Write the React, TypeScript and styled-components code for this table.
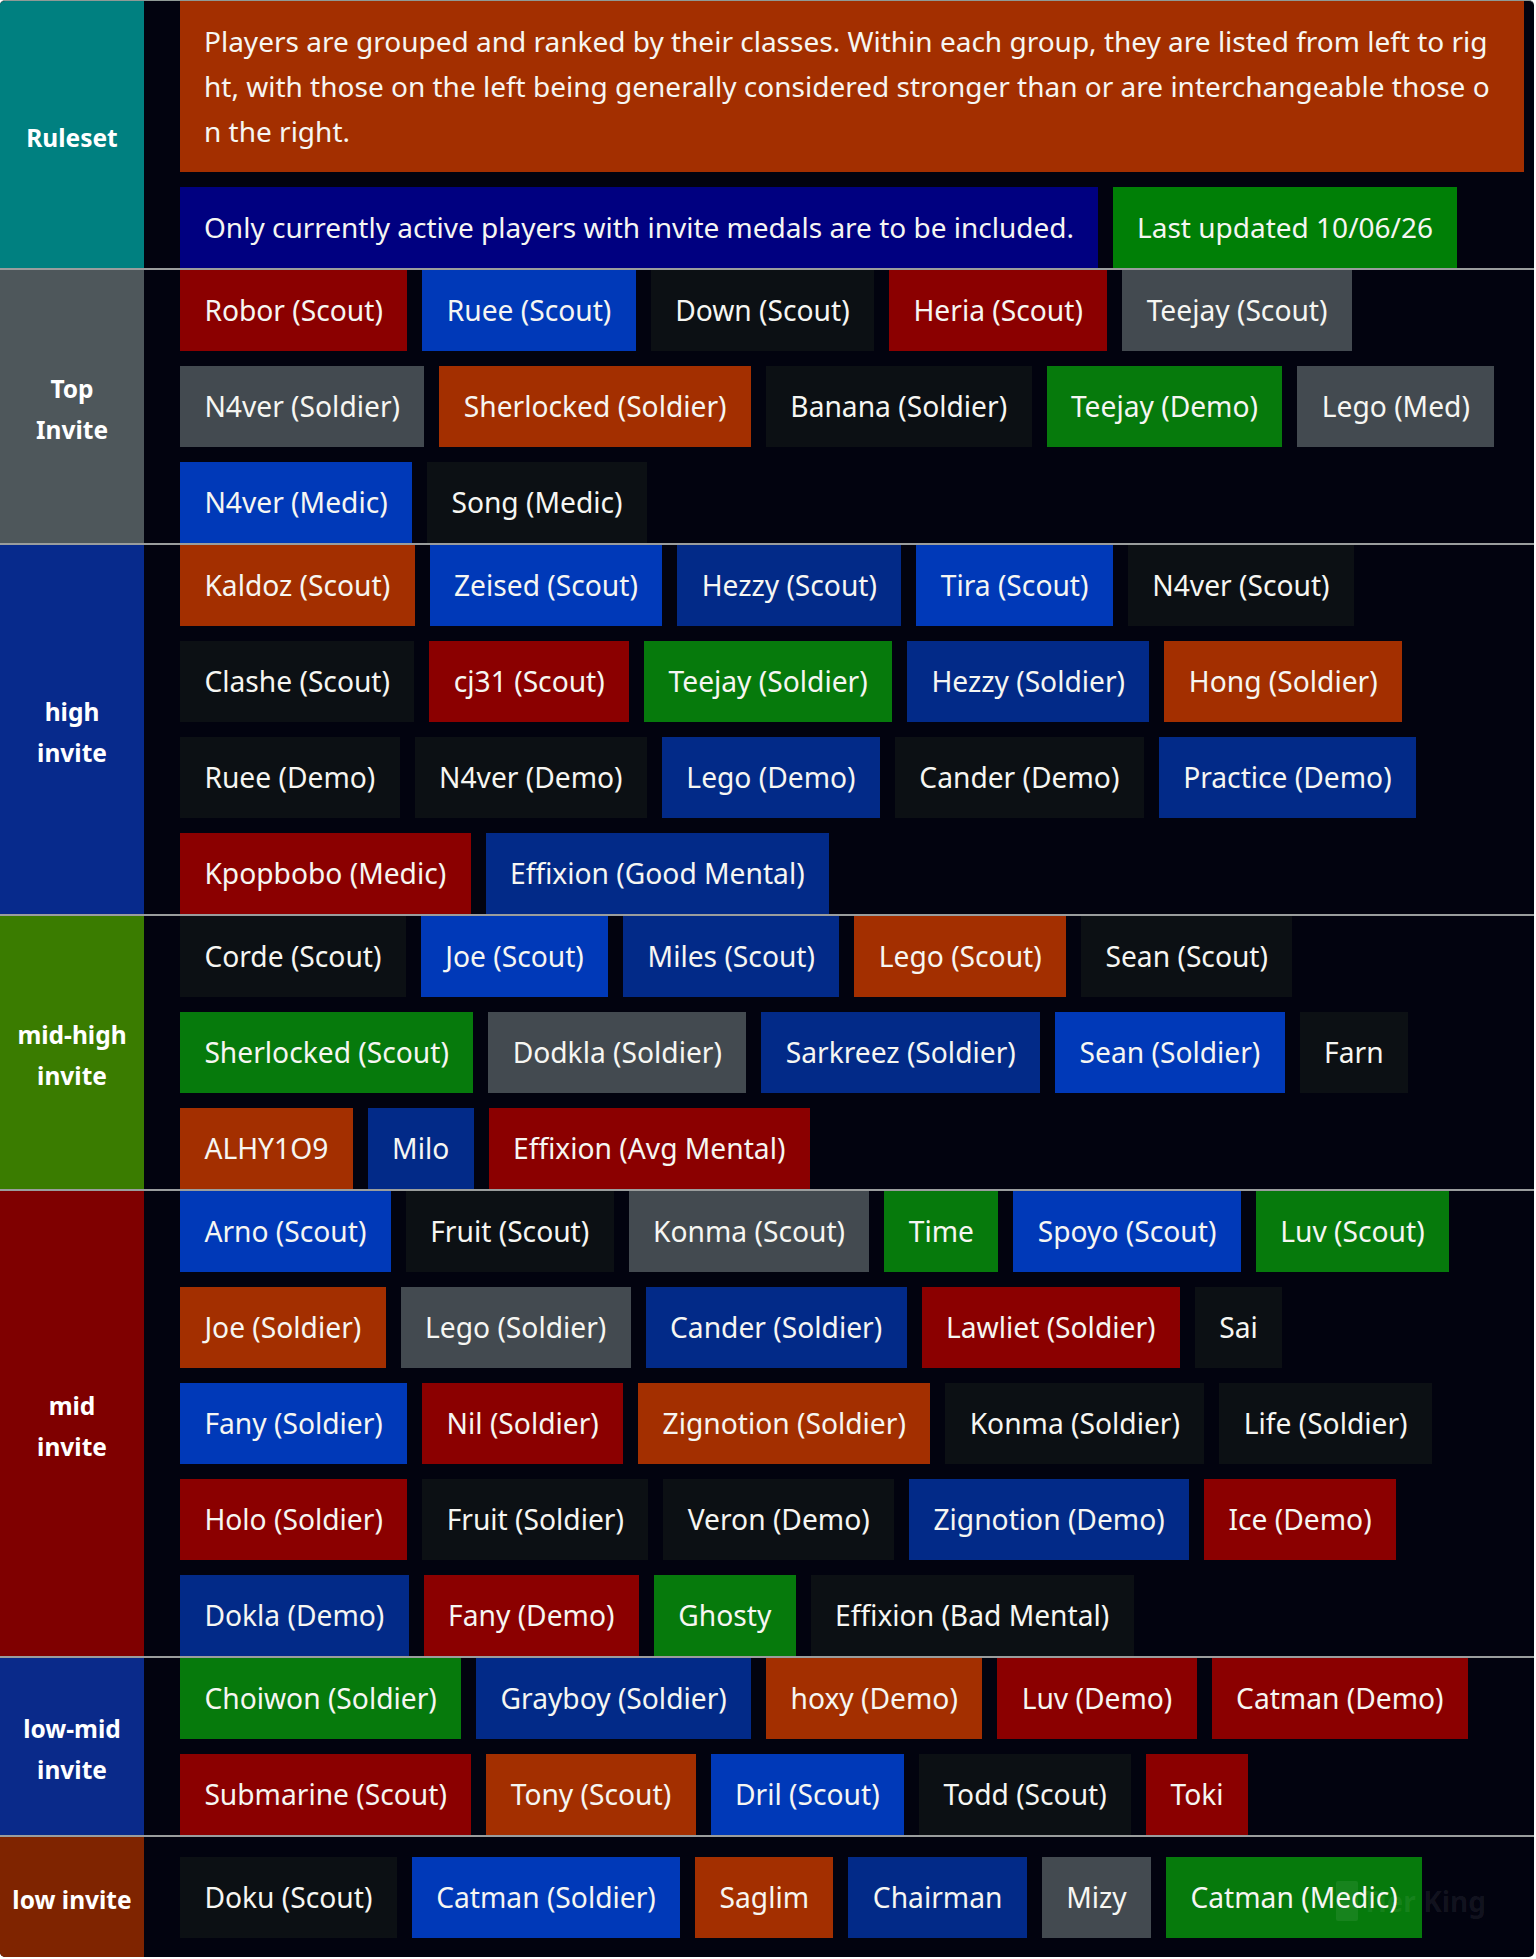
import React from "react";
import styled, { createGlobalStyle } from "styled-components";

const Global = createGlobalStyle`
  html, body { margin: 0; padding: 0; background: #ffffff; }
  body { font-family: "Noto Sans", "Open Sans", sans-serif; }
`;

type Tone = "red" | "blue" | "navy" | "black" | "gray" | "orange" | "green" | "deepnavy" | "lime";

const tones: Record<Tone, string> = {
  red: "#8b0000",
  blue: "#0039b8",
  navy: "#022a88",
  black: "#0c1014",
  gray: "#434a50",
  orange: "#a32f00",
  green: "#067a0c",
  deepnavy: "#000080",
  lime: "#007f06",
};

type Player = [string, Tone];

interface TierData {
  label: string[];
  color: string;
  rows: Player[][];
}

const tiers: TierData[] = [
  {
    label: ["Top", "Invite"],
    color: "#4e575b",
    rows: [
      [["Robor (Scout)", "red"], ["Ruee (Scout)", "blue"], ["Down (Scout)", "black"], ["Heria (Scout)", "red"], ["Teejay (Scout)", "gray"]],
      [["N4ver (Soldier)", "gray"], ["Sherlocked (Soldier)", "orange"], ["Banana (Soldier)", "black"], ["Teejay (Demo)", "green"], ["Lego (Med)", "gray"]],
      [["N4ver (Medic)", "blue"], ["Song (Medic)", "black"]],
    ],
  },
  {
    label: ["high", "invite"],
    color: "#072a8c",
    rows: [
      [["Kaldoz (Scout)", "orange"], ["Zeised (Scout)", "blue"], ["Hezzy (Scout)", "navy"], ["Tira (Scout)", "blue"], ["N4ver (Scout)", "black"]],
      [["Clashe (Scout)", "black"], ["cj31 (Scout)", "red"], ["Teejay (Soldier)", "green"], ["Hezzy (Soldier)", "navy"], ["Hong (Soldier)", "orange"]],
      [["Ruee (Demo)", "black"], ["N4ver (Demo)", "black"], ["Lego (Demo)", "navy"], ["Cander (Demo)", "black"], ["Practice (Demo)", "navy"]],
      [["Kpopbobo (Medic)", "red"], ["Effixion (Good Mental)", "navy"]],
    ],
  },
  {
    label: ["mid-high", "invite"],
    color: "#3a7c00",
    rows: [
      [["Corde (Scout)", "black"], ["Joe (Scout)", "blue"], ["Miles (Scout)", "navy"], ["Lego (Scout)", "orange"], ["Sean (Scout)", "black"]],
      [["Sherlocked (Scout)", "green"], ["Dodkla (Soldier)", "gray"], ["Sarkreez (Soldier)", "navy"], ["Sean (Soldier)", "blue"], ["Farn", "black"]],
      [["ALHY1O9", "orange"], ["Milo", "navy"], ["Effixion (Avg Mental)", "red"]],
    ],
  },
  {
    label: ["mid", "invite"],
    color: "#7f0000",
    rows: [
      [["Arno (Scout)", "blue"], ["Fruit (Scout)", "black"], ["Konma (Scout)", "gray"], ["Time", "green"], ["Spoyo (Scout)", "blue"], ["Luv (Scout)", "green"]],
      [["Joe (Soldier)", "orange"], ["Lego (Soldier)", "gray"], ["Cander (Soldier)", "navy"], ["Lawliet (Soldier)", "red"], ["Sai", "black"]],
      [["Fany (Soldier)", "blue"], ["Nil (Soldier)", "red"], ["Zignotion (Soldier)", "orange"], ["Konma (Soldier)", "black"], ["Life (Soldier)", "black"]],
      [["Holo (Soldier)", "red"], ["Fruit (Soldier)", "black"], ["Veron (Demo)", "black"], ["Zignotion (Demo)", "navy"], ["Ice (Demo)", "red"]],
      [["Dokla (Demo)", "navy"], ["Fany (Demo)", "red"], ["Ghosty", "green"], ["Effixion (Bad Mental)", "black"]],
    ],
  },
  {
    label: ["low-mid", "invite"],
    color: "#0a2a8a",
    rows: [
      [["Choiwon (Soldier)", "green"], ["Grayboy (Soldier)", "navy"], ["hoxy (Demo)", "orange"], ["Luv (Demo)", "red"], ["Catman (Demo)", "red"]],
      [["Submarine (Scout)", "red"], ["Tony (Scout)", "orange"], ["Dril (Scout)", "blue"], ["Todd (Scout)", "black"], ["Toki", "red"]],
    ],
  },
  {
    label: ["low invite"],
    color: "#7f2400",
    rows: [
      [["Doku (Scout)", "black"], ["Catman (Soldier)", "blue"], ["Saglim", "orange"], ["Chairman", "navy"], ["Mizy", "gray"], ["Catman (Medic)", "green"]],
    ],
  },
];

const ruleLines = [
  "Players are grouped and ranked by their classes. Within each group, they are listed from left to rig",
  "ht, with those on the left being generally considered stronger than or are interchangeable those o",
  "n the right.",
];

const Board = styled.main`
  position: relative;
  width: 1534px;
  background: #02030f;
  border-top: 1px solid #8f9a96;
  border-radius: 5px;
  overflow: hidden;
`;

const Tier = styled.section`
  display: flex;
  min-height: 120px;
  & + & {
    border-top: 2px solid #9a9d9d;
  }
`;

const Label = styled.div<{ $bg: string }>`
  flex: 0 0 144px;
  box-sizing: border-box;
  padding-top: 5px;
  background: ${(p) => p.$bg};
  display: flex;
  flex-direction: column;
  align-items: center;
  justify-content: center;
  color: #ffffff;
  font-size: 24.5px;
  font-weight: 700;
  line-height: 41px;
  text-align: center;
  white-space: nowrap;
`;

const LabelLine = styled.span`
  display: block;
`;

const Items = styled.div`
  flex: 1;
  display: flex;
  flex-direction: column;
  justify-content: center;
  gap: 15px;
  padding: 0 10px 0 36px;
`;

const Line = styled.div`
  display: flex;
  gap: 15px;
`;

const Chip = styled.div<{ $tone: Tone; $note?: boolean; $wide?: boolean }>`
  flex: ${(p) => (p.$wide ? "1 1 auto" : "0 0 auto")};
  background: ${(p) => tones[p.$tone]};
  color: #f6f6f2;
  font-size: ${(p) => (p.$note ? "28px" : "28.2px")};
  line-height: 45px;
  padding: 18px ${(p) => (p.$note ? "24px" : "24.4px")};
  white-space: nowrap;
`;

const NoteLine = styled.span`
  display: block;
`;

const Watermark = styled.div`
  position: absolute;
  right: 48px;
  bottom: 36px;
  display: flex;
  align-items: center;
  gap: 4px;
  color: rgba(255, 255, 255, 0.07);
  font-size: 28px;
  font-weight: 700;
  line-height: 40px;
  pointer-events: none;
`;

function Logo() {
  return (
    <svg width="22" height="40" viewBox="0 0 22 40" aria-hidden="true">
      <rect x="0" y="0" width="22" height="40" rx="2" fill="rgba(255,255,255,0.07)" />
    </svg>
  );
}

export default function App() {
  return (
    <>
      <Global />
      <Board>
        <Tier>
          <Label $bg="#008080">
            <LabelLine>Ruleset</LabelLine>
          </Label>
          <Items>
            <Line>
              <Chip $tone="orange" $note $wide>
                {ruleLines.map((l) => (
                  <NoteLine key={l}>{l}</NoteLine>
                ))}
              </Chip>
            </Line>
            <Line>
              <Chip $tone="deepnavy" $note>
                Only currently active players with invite medals are to be included.
              </Chip>
              <Chip $tone="lime" $note>
                Last updated 10/06/26
              </Chip>
            </Line>
          </Items>
        </Tier>
        {tiers.map((t) => (
          <Tier key={t.label.join(" ")}>
            <Label $bg={t.color}>
              {t.label.map((l) => (
                <LabelLine key={l}>{l}</LabelLine>
              ))}
            </Label>
            <Items>
              {t.rows.map((row, i) => (
                <Line key={i}>
                  {row.map(([name, tone]) => (
                    <Chip key={name} $tone={tone}>
                      {name}
                    </Chip>
                  ))}
                </Line>
              ))}
            </Items>
          </Tier>
        ))}
        <Watermark>
          <Logo />
          <span>Tier King</span>
        </Watermark>
      </Board>
    </>
  );
}
